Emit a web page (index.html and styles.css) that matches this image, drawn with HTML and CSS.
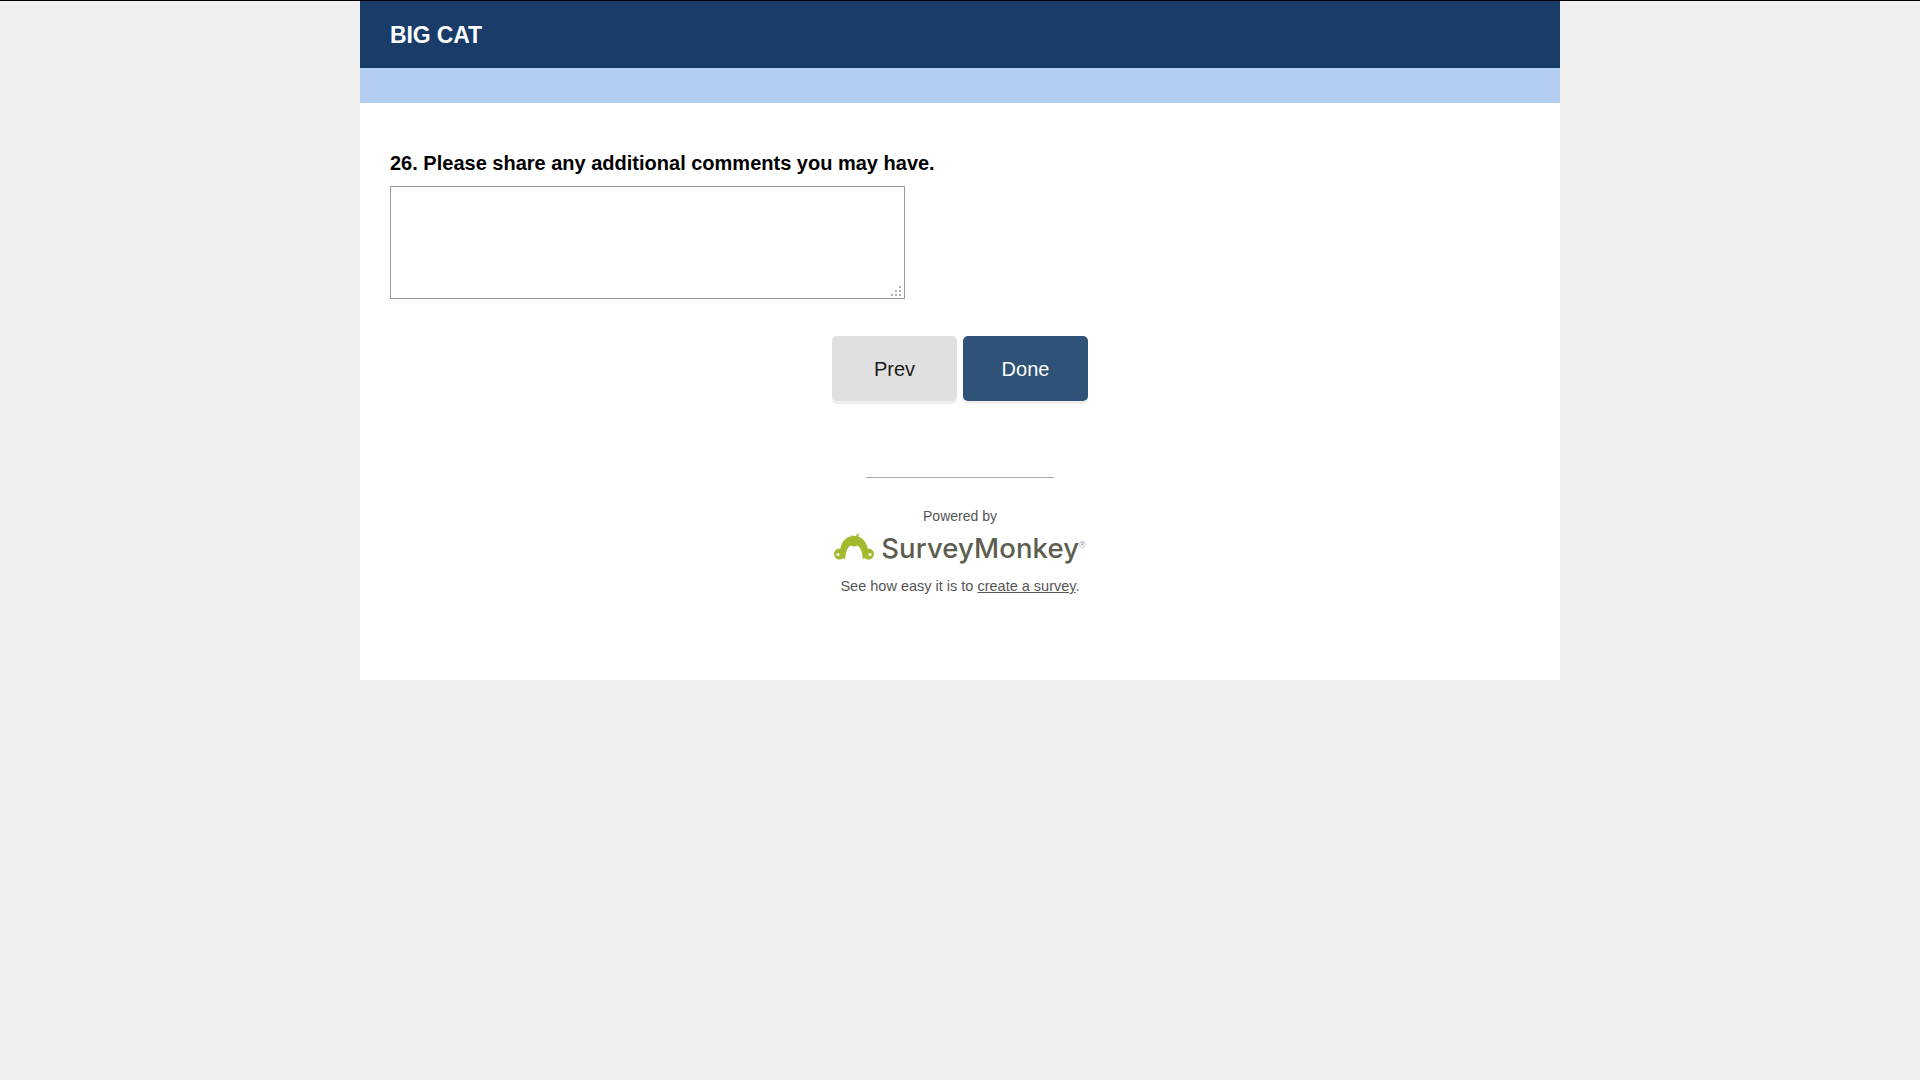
FILE: index.html
```html
<!DOCTYPE html>
<html lang="en">
<head>
    <meta charset="UTF-8" />
    <meta name="viewport" content="width=device-width, initial-scale=1" />
    <title>BIG CAT</title>
    <link rel="stylesheet" href="styles.css">
</head>
<body>

<div class="survey">
    <div class="survey-title">BIG CAT</div>
    <div class="survey-band"></div>

    <div class="survey-body">
        <label class="question" for="comments">26. Please share any additional comments you may have.</label>
        <textarea class="answer" id="comments"></textarea>

        <div class="buttons">
            <button class="btn btn-prev">Prev</button>
            <button class="btn btn-done">Done</button>
        </div>

        <div class="footer">
            <div class="footer-rule"></div>
            <div class="powered">Powered by</div>
            <div class="logo">
                <svg class="logo-mark" width="40" height="30" viewBox="0 0 40 30">
                    <path fill="#a1bb2f" d="M18 5 L17 2 L20.800 3.500 L25 0 L24 5.500 Z" />
                    <path fill="#a1bb2f" d="M6 20 C6 9 12 3 20 3 C28 3 34 9 34 20 L33 24.500 L28.800 26 C28.500 18.500 26 13 22.500 12.800 C21.500 12.700 20.800 13.600 20 13.600 C19.200 13.600 18.500 12.700 17.500 12.800 C14 13 11.500 18.500 11.200 26 L7 24.500 Z" />
                    <circle cx="5.500" cy="21" r="5.500" fill="#a1bb2f" />
                    <circle cx="34.500" cy="21" r="5.500" fill="#a1bb2f" />
                    <circle cx="4" cy="21.500" r="1.500" fill="#fff" />
                    <circle cx="36" cy="21.500" r="1.500" fill="#fff" />
                </svg>
                <span class="logo-word">SurveyMonkey</span><span class="logo-reg">®</span>
            </div>
            <div class="easy">See how easy it is to <a href="#">create a survey</a>.</div>
        </div>
    </div>
</div>

</body>
</html>
```

FILE: styles.css
```css
* {
    box-sizing: border-box;
}
body {
    margin: 0;
    min-height: 100vh;
    background: #efefef;
    border-top: 1px solid #000;
    font-family: "Liberation Sans", Arial, sans-serif;
}
.survey {
    width: 1200px;
    margin: 0 auto;
    background: #fff;
}
.survey-title {
    height: 67px;
    padding: 0 30px;
    background: #193c69;
    color: #fff;
    font-size: 23px;
    font-weight: 700;
    letter-spacing: -0.15px;
    line-height: 68px;
}
.survey-band {
    height: 35px;
    background: #b3cef3;
}
.survey-body {
    padding: 48px 30px 86px;
}
.question {
    display: block;
    font-size: 20px;
    font-weight: 700;
    line-height: 24px;
    margin-bottom: 11px;
    color: #000;
}
.answer {
    display: block;
    width: 515px;
    height: 113px;
    border: 1px solid #999;
    background: #fff;
    margin: 0;
}
/* grip dots */
.answer::-webkit-resizer {
    background-color: transparent;
    background-repeat: no-repeat;
    background-size: 2px 2px;
    background-image:
        linear-gradient(#b0b0b0, #b0b0b0), linear-gradient(#b0b0b0, #b0b0b0),
        linear-gradient(#b0b0b0, #b0b0b0), linear-gradient(#b0b0b0, #b0b0b0),
        linear-gradient(#b0b0b0, #b0b0b0), linear-gradient(#b0b0b0, #b0b0b0);
    background-position: 10px 3px, 6px 7px, 10px 7px, 2px 11px, 6px 11px, 10px 11px;
}
.buttons {
    display: flex;
    justify-content: center;
    gap: 6px;
    margin-top: 37px;
}
.btn {
    width: 125px;
    height: 65px;
    border: none;
    border-radius: 5px;
    font-family: inherit;
    font-size: 20px;
    padding: 2px 0 0;
    box-shadow: 0 3px 0 #eeeeee;
}
.btn-prev {
    background: #e0e0e0;
    color: #1c1c1c;
}
.btn-done {
    background: #305278;
    color: #fff;
}
.footer {
    margin-top: 76px;
    display: flex;
    flex-direction: column;
    align-items: center;
    color: #555;
    font-size: 14px;
}
.footer-rule {
    width: 188px;
    border-top: 1px solid #aaa;
}
.powered {
    margin-top: 30px;
    line-height: 16px;
}
.logo {
    display: flex;
    align-items: center;
    height: 36px;
    margin-top: 6px;
}
.logo-mark {
    display: block;
    margin-right: 7px;
}
.logo-word {
    font-family: Inter, sans-serif;
    font-size: 27.5px;
    font-weight: 500;
    letter-spacing: 0.1px;
    color: #5e5e50;
}
.logo-reg {
    font-size: 9px;
    color: #999;
    margin-top: -6px;
}
.easy {
    margin-top: 12px;
    font-size: 14.5px;
    line-height: 16px;
}
.easy a {
    color: #555;
}
```
